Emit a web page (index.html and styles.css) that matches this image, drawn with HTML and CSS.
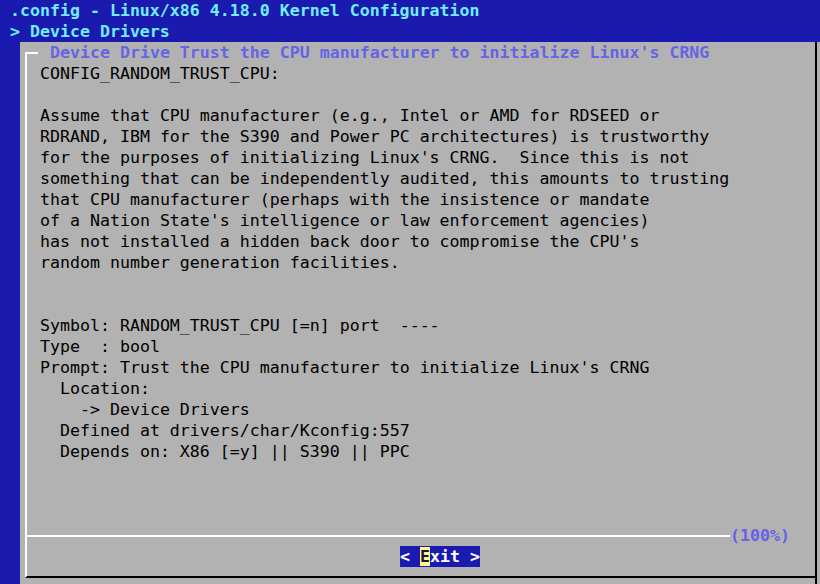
FILE: index.html
```html
<!DOCTYPE html>
<html>
<head>
<meta charset="utf-8">
<link rel="stylesheet" href="styles.css">
</head>
<body>
<div class="hdr">.config - Linux/x86 4.18.0 Kernel Configuration</div>
<div class="hdr">&gt; Device Drivers</div>
<div class="dialog">
  <div class="frame">
    <div class="titlebar">
      <span class="corner"></span>
      <span class="title"> Device Drive Trust the CPU manufacturer to initialize Linux's CRNG</span>
    </div>
    <div class="content">
<pre class="text">CONFIG_RANDOM_TRUST_CPU:

Assume that CPU manufacturer (e.g., Intel or AMD for RDSEED or
RDRAND, IBM for the S390 and Power PC architectures) is trustworthy
for the purposes of initializing Linux's CRNG.  Since this is not
something that can be independently audited, this amounts to trusting
that CPU manufacturer (perhaps with the insistence or mandate
of a Nation State's intelligence or law enforcement agencies)
has not installed a hidden back door to compromise the CPU's
random number generation facilities.


Symbol: RANDOM_TRUST_CPU [=n] port  ----
Type  : bool
Prompt: Trust the CPU manufacturer to initialize Linux's CRNG
  Location:
    -&gt; Device Drivers
  Defined at drivers/char/Kconfig:557
  Depends on: X86 [=y] || S390 || PPC</pre>
      <div class="spacer"></div>
      <div class="seprow">
        <span class="hline"></span>
        <span class="pct">(100%)</span>
      </div>
      <div class="btnrow">
        <span class="btn">&lt; <span class="hot">E</span>xit &gt;</span>
      </div>
    </div>
  </div>
</div>
</body>
</html>
```
FILE: styles.css
```css
html, body {
  margin: 0;
  padding: 0;
}
body {
  width: 820px;
  height: 584px;
  overflow: hidden;
  background: #1a1aae;
  font-family: "DejaVu Sans Mono", monospace;
  font-size: 16.6px;
  line-height: 21px;
}
.hdr {
  height: 21px;
  padding-left: 10px;
  color: #70eeff;
  font-weight: bold;
  white-space: pre;
}
.dialog {
  margin-left: 20px;
  height: 542px;
  background: #b2b2b2;
  padding-right: 3px;
  display: flex;
}
.frame {
  flex: 1;
  border-right: 2px solid #000;
  display: flex;
  flex-direction: column;
}
.titlebar {
  height: 21px;
  display: flex;
  align-items: flex-end;
}
.corner {
  margin-left: 5px;
  width: 13px;
  height: 11px;
  border-left: 2px solid #fff;
  border-top: 2px solid #fff;
  box-sizing: border-box;
  align-self: flex-end;
}
.title {
  align-self: center;
  white-space: pre;
  color: #6464e4;
  font-weight: bold;
  margin-left: 2px;
}
.content {
  flex: 1;
  margin-left: 5px;
  margin-bottom: 6px;
  border-left: 2px solid #fff;
  border-bottom: 2px solid #000;
  padding-left: 13px;
  padding-bottom: 9px;
  display: flex;
  flex-direction: column;
  color: #000;
}
.text {
  margin: 0;
  font: inherit;
  white-space: pre;
}
.spacer {
  flex: 1;
}
.seprow {
  height: 21px;
  display: flex;
  align-items: center;
  padding-right: 25px;
}
.hline {
  flex: 1;
  height: 2px;
  background: #fff;
  margin-left: -15px;
}
.pct {
  color: #6464e4;
  font-weight: bold;
  white-space: pre;
}
.btnrow {
  height: 21px;
  padding-left: 360px;
  display: flex;
}
.btn {
  background: #1a1aae;
  color: #fff;
  font-weight: bold;
  white-space: pre;
}
.hot {
  background: #fff58a;
  color: #14143c;
}
```
